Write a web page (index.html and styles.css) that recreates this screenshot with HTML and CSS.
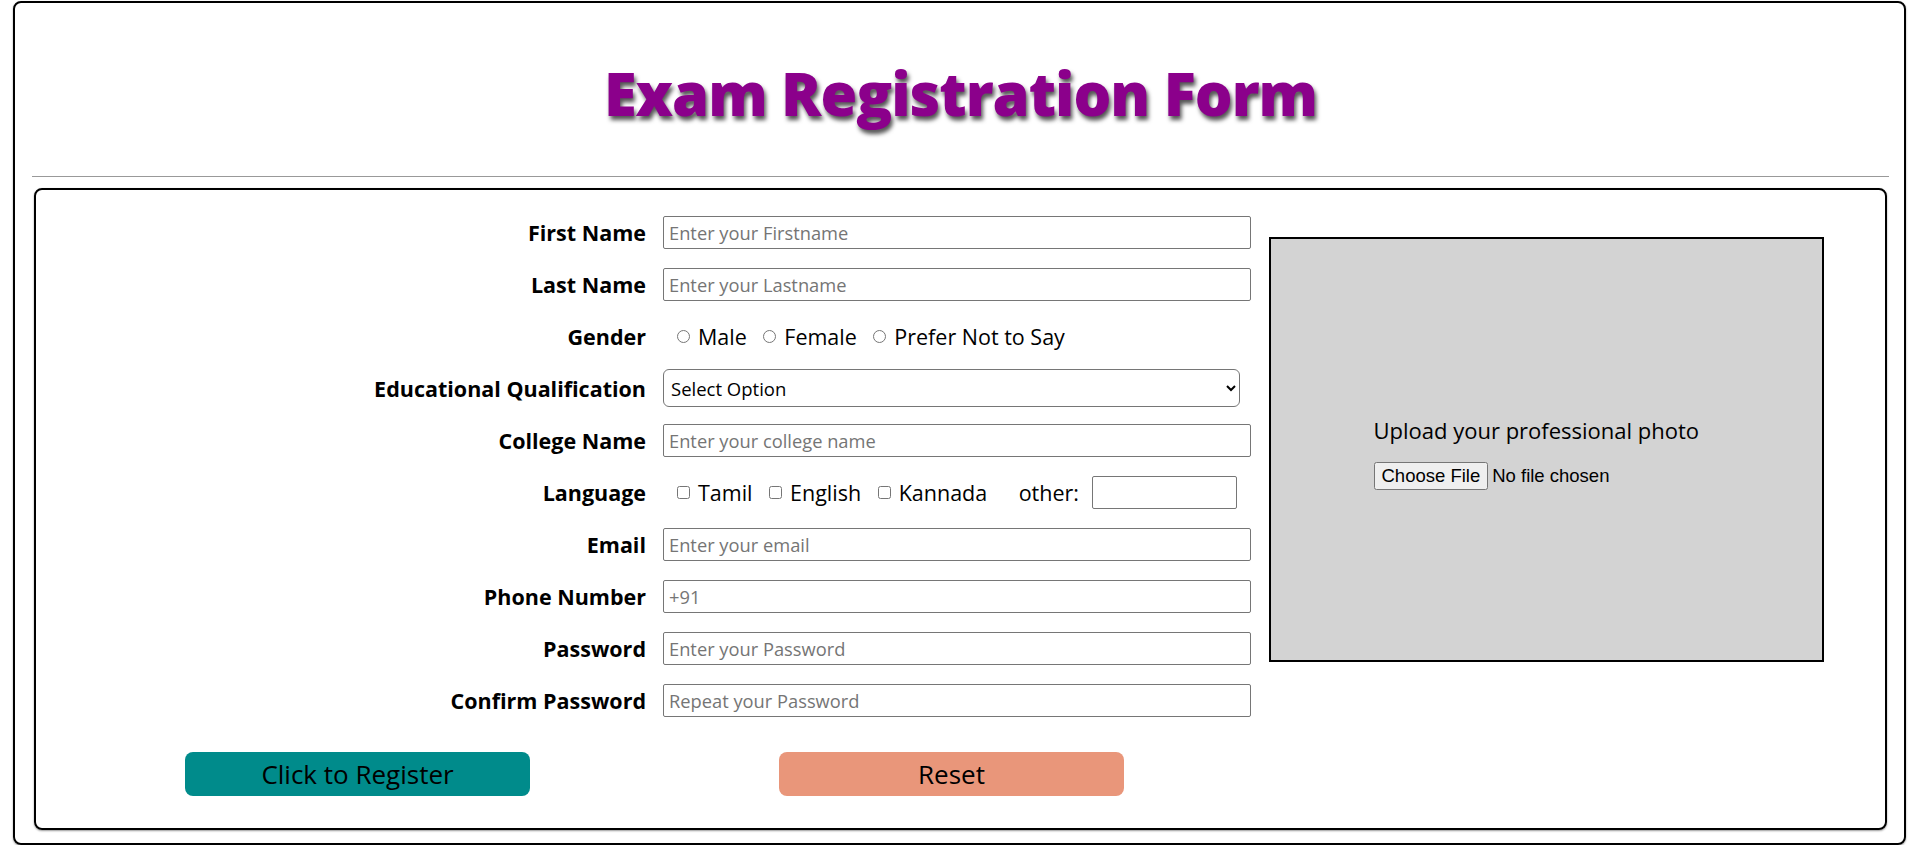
FILE: index.html
```html
<!DOCTYPE html>
<html lang="en">
<head>
<meta charset="utf-8">
<title>Exam Registration Form</title>
<link rel="stylesheet" href="styles.css">
</head>
<body>
<div class="page">
  <h1 class="title">Exam Registration Form</h1>
  <hr class="divider">
  <form class="card">
    <div class="main">
      <div class="fields">
        <label class="lbl" for="fn">First Name</label>
        <input class="txt" id="fn" type="text" placeholder="Enter your Firstname">

        <label class="lbl" for="ln">Last Name</label>
        <input class="txt" id="ln" type="text" placeholder="Enter your Lastname">

        <span class="lbl">Gender</span>
        <div class="choices">
          <label class="opt"><input type="radio" name="gender">Male</label>
          <label class="opt"><input type="radio" name="gender">Female</label>
          <label class="opt"><input type="radio" name="gender">Prefer Not to Say</label>
        </div>

        <label class="lbl" for="edu">Educational Qualification</label>
        <select class="sel" id="edu">
          <option>Select Option</option>
        </select>

        <label class="lbl" for="col">College Name</label>
        <input class="txt" id="col" type="text" placeholder="Enter your college name">

        <span class="lbl">Language</span>
        <div class="choices">
          <label class="opt"><input type="checkbox">Tamil</label>
          <label class="opt"><input type="checkbox">English</label>
          <label class="opt"><input type="checkbox">Kannada</label>
          <label class="other">other: <input class="txt short" type="text"></label>
        </div>

        <label class="lbl" for="em">Email</label>
        <input class="txt" id="em" type="email" placeholder="Enter your email">

        <label class="lbl" for="ph">Phone Number</label>
        <input class="txt" id="ph" type="tel" placeholder="+91">

        <label class="lbl" for="pw">Password</label>
        <input class="txt" id="pw" type="password" placeholder="Enter your Password">

        <label class="lbl" for="cpw">Confirm Password</label>
        <input class="txt" id="cpw" type="password" placeholder="Repeat your Password">
      </div>
      <div class="photo">
        <div class="upload">
          <p class="upload-text">Upload your professional photo</p>
          <input class="file" type="file">
        </div>
      </div>
    </div>
    <div class="actions">
      <button type="submit" class="btn btn-register">Click to Register</button>
      <button type="reset" class="btn btn-reset">Reset</button>
    </div>
  </form>
</div>
</body>
</html>
```

FILE: styles.css
```css
* {
  box-sizing: border-box;
}

body {
  margin: 0;
  background: #fff;
  color: #000;
  font-family: "Open Sans", "Liberation Sans", sans-serif;
}

.page {
  margin: 1px 6px 0 13px;
  height: 844px;
  border: 2px solid #000;
  border-radius: 8px;
  padding: 0 17px 0 19px;
  box-shadow: 0 1px 2px rgba(0, 0, 0, 0.4);
}

.title {
  margin: 0;
  padding-top: 50px;
  line-height: 80px;
  text-align: center;
  font-size: 59.5px;
  font-weight: 800;
  letter-spacing: -1px;
  color: #8b008b;
  text-shadow: 2px 4px 4px #555;
}

.divider {
  margin: 43px -2px 0;
  height: 0;
  border: 0;
  border-top: 1px solid #999;
}

.card {
  margin-top: 11px;
  height: 642px;
  border: 2px solid #000;
  border-radius: 8px;
  padding-top: 16px;
  box-shadow: 0 1px 2px rgba(0, 0, 0, 0.4);
}

.main {
  display: flex;
  align-items: flex-start;
  padding-left: 330px;
}

.fields {
  display: grid;
  grid-template-columns: 280px 588px;
  grid-auto-rows: 52px;
  column-gap: 17px;
  align-items: center;
}

.lbl {
  text-align: right;
  font-size: 21.5px;
  font-weight: 700;
  white-space: nowrap;
}

.txt {
  width: 100%;
  height: 33px;
  border: 1px solid #767676;
  border-radius: 2px;
  padding: 0 5px;
  font: 18.3px "Open Sans", "Liberation Sans", sans-serif;
  color: #000;
}

.txt::placeholder {
  color: #757575;
}

.sel {
  width: 577px;
  height: 38px;
  border: 1px solid #767676;
  border-radius: 6px;
  padding: 0 3px;
  background: #fff;
  font: 18.5px "Open Sans", "Liberation Sans", sans-serif;
  color: #000;
}

.choices {
  display: flex;
  align-items: center;
  padding-left: 14px;
  font-size: 21.5px;
}

.opt {
  display: flex;
  align-items: center;
  gap: 8px;
  margin-right: 16.5px;
}

.opt input {
  margin: 0;
  width: 13px;
  height: 13px;
}

.other {
  display: flex;
  align-items: center;
  gap: 13px;
  margin-left: 15px;
}

.txt.short {
  width: 145px;
}

.photo {
  margin: 31px 0 0 18px;
  width: 555px;
  height: 425px;
  border: 2px solid #000;
  background: #d3d3d3;
  display: flex;
  align-items: center;
  justify-content: center;
  padding: 5px 0 0 4px;
}

.upload-text {
  margin: 0 0 17px;
  font-size: 22px;
  line-height: 30px;
}

.file {
  font: 18.5px "Liberation Sans", Arial, sans-serif;
}

.actions {
  display: flex;
  gap: 249px;
  padding-left: 149px;
  margin-top: 26px;
}

.btn {
  width: 345px;
  height: 44px;
  border: 0;
  border-radius: 8px;
  font: 26px "Open Sans", "Liberation Sans", sans-serif;
  color: #000;
}

.btn-register {
  background: #008b8b;
}

.btn-reset {
  background: #e9967a;
}
```
